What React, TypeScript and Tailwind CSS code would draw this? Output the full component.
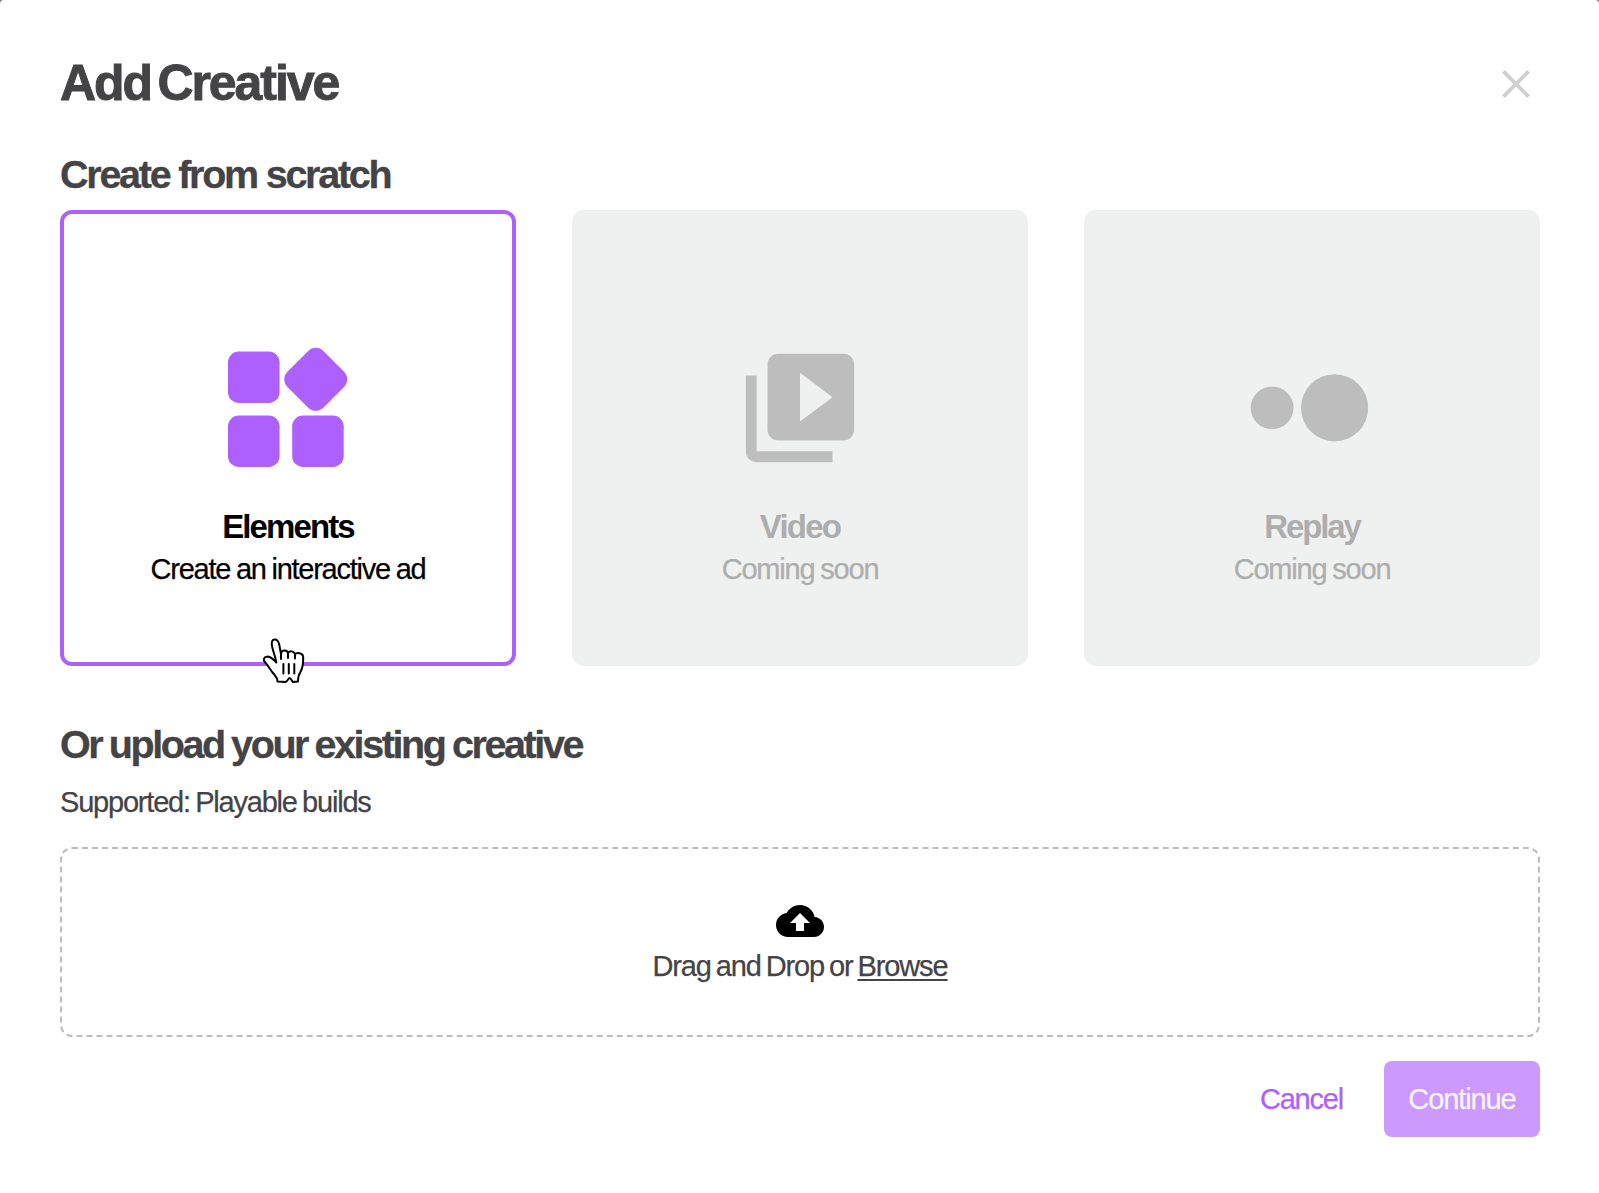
import React from 'react';

const ICON = 'block h-[130px] w-[130px]';

function ElementsIcon() {
  return (
    <svg className={ICON} viewBox="0 0 130 130" fill="#ae60ff">
      <rect x="5" y="8.5" width="51.5" height="51.5" rx="10.7" />
      <rect x="5" y="72.5" width="51.5" height="51.5" rx="10.7" />
      <rect x="69.2" y="72.5" width="51.5" height="51.5" rx="10.7" />
      <rect x="67.35" y="10.95" width="50.8" height="50.8" rx="10.7" transform="rotate(45 92.75 36.35)" />
    </svg>
  );
}

function VideoIcon() {
  return (
    <svg className={ICON} viewBox="0 0 24 24" fill="#bdbdbd">
      <path d="M4 6H2v14c0 1.1.9 2 2 2h14v-2H4V6zm16-4H8c-1.1 0-2 .9-2 2v12c0 1.1.9 2 2 2h12c1.1 0 2-.9 2-2V4c0-1.1-.9-2-2-2zm-8 12.5v-9l6 4.5-6 4.5z" />
    </svg>
  );
}

function ReplayIcon() {
  return (
    <svg className={ICON} viewBox="0 0 130 130" fill="#bdbdbd">
      <circle cx="25.1" cy="64.8" r="21.4" />
      <circle cx="87.6" cy="64.8" r="33.6" />
    </svg>
  );
}

function HandCursor() {
  return (
    <svg className="absolute left-[196px] top-[422px] h-[56px] w-[56px]" viewBox="0 0 56 56" fill="#fff" stroke="#000" strokeWidth="2" strokeLinejoin="round" strokeLinecap="round">
      <path d="M20.3 30.5 C19.8 26 17.4 20.5 16.2 15 C15.2 10.5 15.8 7.8 18.4 7.6 C21 7.4 22.5 9.5 23.2 12.5 L25 22 L25.4 20.4 C26.2 17.6 31.4 17.6 32 21.4 C33 18.4 38.2 18.6 39 22.6 C40.4 20 47.2 20.4 47.2 25.5 C47.4 33.5 46 37.5 44.2 40.5 C42.5 43 42 46 42 49.6 L36.8 50 C35.5 48 34.5 46 33.5 46 C32.5 46 31.5 49.4 29.5 50 L21.5 49.6 C21.5 46 20 44.5 18.5 42.8 C14 38 12.5 33.5 9.2 30.5 C6.6 27.5 8 24.4 11.8 24.4 C15.5 24.8 18 28 20.3 30.5 Z" />
      <path d="M25 22v5M32 21.4v4.6M39 22.6v4" fill="none" />
      <path d="M27.4 32v9.5M32.8 32v9.5M38.3 32v9.5" fill="none" />
    </svg>
  );
}

type CardProps = { icon: React.ReactNode; title: string; titleClass: string; note: string; noteClass: string; active?: boolean };

function Card({ icon, title, titleClass, note, noteClass, active }: CardProps) {
  return (
    <div
      className={
        'flex h-[456px] flex-col items-center rounded-[12px] border-4 pt-[129px] ' +
        (active ? 'border-[#ae60ff] bg-white text-black' : 'border-[#eff1f1] bg-[#eff1f1] text-[#adadad]')
      }
    >
      {icon}
      <div className={'mt-[34px] whitespace-nowrap text-[33px] leading-[40px] font-bold ' + titleClass}>{title}</div>
      <div className={'mt-[2px] whitespace-nowrap text-[29px] leading-[40px] [-webkit-text-stroke:0.25px] ' + noteClass}>{note}</div>
    </div>
  );
}

export default function App() {
  return (
    <div className="bg-[#777]">
      <div className="h-[1193px] w-[1599px] overflow-hidden rounded-t-[4px] bg-white pl-[60px] pr-[59px] pt-[52px] font-['Liberation_Sans',Arial,sans-serif] text-[#444345]">
        <div className="flex h-[64px] items-center justify-between">
          <h1 className="-mt-[2px] text-[50px] leading-[64px] font-bold tracking-[-2.05px] whitespace-nowrap [word-spacing:-5.5px] [-webkit-text-stroke:0.9px_#444345]">Add Creative</h1>
          <svg className="block h-[48px] w-[48px]" viewBox="0 0 24 24" fill="#d0d0d0">
            <path d="M19 6.41L17.59 5 12 10.59 6.41 5 5 6.41 10.59 12 5 17.59 6.41 19 12 13.41 17.59 19 19 17.59 13.41 12z" />
          </svg>
        </div>
        <h2 className="mt-[34px] text-[39.5px] leading-[48px] font-bold tracking-[-2.25px] whitespace-nowrap [-webkit-text-stroke:0.3px]">Create from scratch</h2>
        <div className="relative mt-[12px] grid grid-cols-3 gap-[56px]">
          <Card active icon={<ElementsIcon />} title="Elements" titleClass="tracking-[-1.9px]" note="Create an interactive ad" noteClass="tracking-[-1.25px] [word-spacing:-1px]" />
          <Card icon={<VideoIcon />} title="Video" titleClass="tracking-[-1.8px]" note="Coming soon" noteClass="tracking-[-1.2px] [word-spacing:-1px]" />
          <Card icon={<ReplayIcon />} title="Replay" titleClass="tracking-[-2.1px]" note="Coming soon" noteClass="tracking-[-1.2px] [word-spacing:-1px]" />
          <HandCursor />
        </div>
        <h2 className="mt-[54px] text-[39.5px] leading-[48px] font-bold tracking-[-2.4px] whitespace-nowrap [word-spacing:-1.2px] [-webkit-text-stroke:0.3px]">Or upload your existing creative</h2>
        <p className="mt-[14px] text-[29px] leading-[40px] tracking-[-1.2px] whitespace-nowrap [word-spacing:-1.6px] [-webkit-text-stroke:0.25px]">Supported: Playable builds</p>
        <div className="mt-[25px] flex h-[190px] flex-col items-center rounded-[12px] border-2 border-dashed border-[#bdbdbd] pt-[48px]">
          <svg className="block h-[48px] w-[48px]" viewBox="0 0 24 24" fill="#000">
            <path d="M19.35 10.04C18.67 6.59 15.64 4 12 4 9.11 4 6.6 5.64 5.35 8.04 2.34 8.36 0 10.91 0 14c0 3.31 2.69 6 6 6h13c2.76 0 5-2.24 5-5 0-2.64-2.05-4.78-4.65-4.96zM14 13v4h-4v-4H7l5-5 5 5h-3z" />
          </svg>
          <p className="mt-[1px] text-[29px] leading-[40px] tracking-[-1.1px] whitespace-nowrap [word-spacing:-2.1px] [-webkit-text-stroke:0.25px]">
            Drag and Drop or <span className="underline decoration-2 underline-offset-[3px]">Browse</span>
          </p>
        </div>
        <div className="mt-[24px] flex h-[76px] items-center justify-end gap-[41px] text-[29px] [-webkit-text-stroke:0.25px]">
          <button className="pt-[2px] tracking-[-1.2px] text-[#ae60ff]">Cancel</button>
          <button className="h-[76px] w-[156px] rounded-[8px] bg-[#cc99ff] pt-[2px] tracking-[-1.1px] text-[#f5f5f5]">Continue</button>
        </div>
      </div>
    </div>
  );
}
